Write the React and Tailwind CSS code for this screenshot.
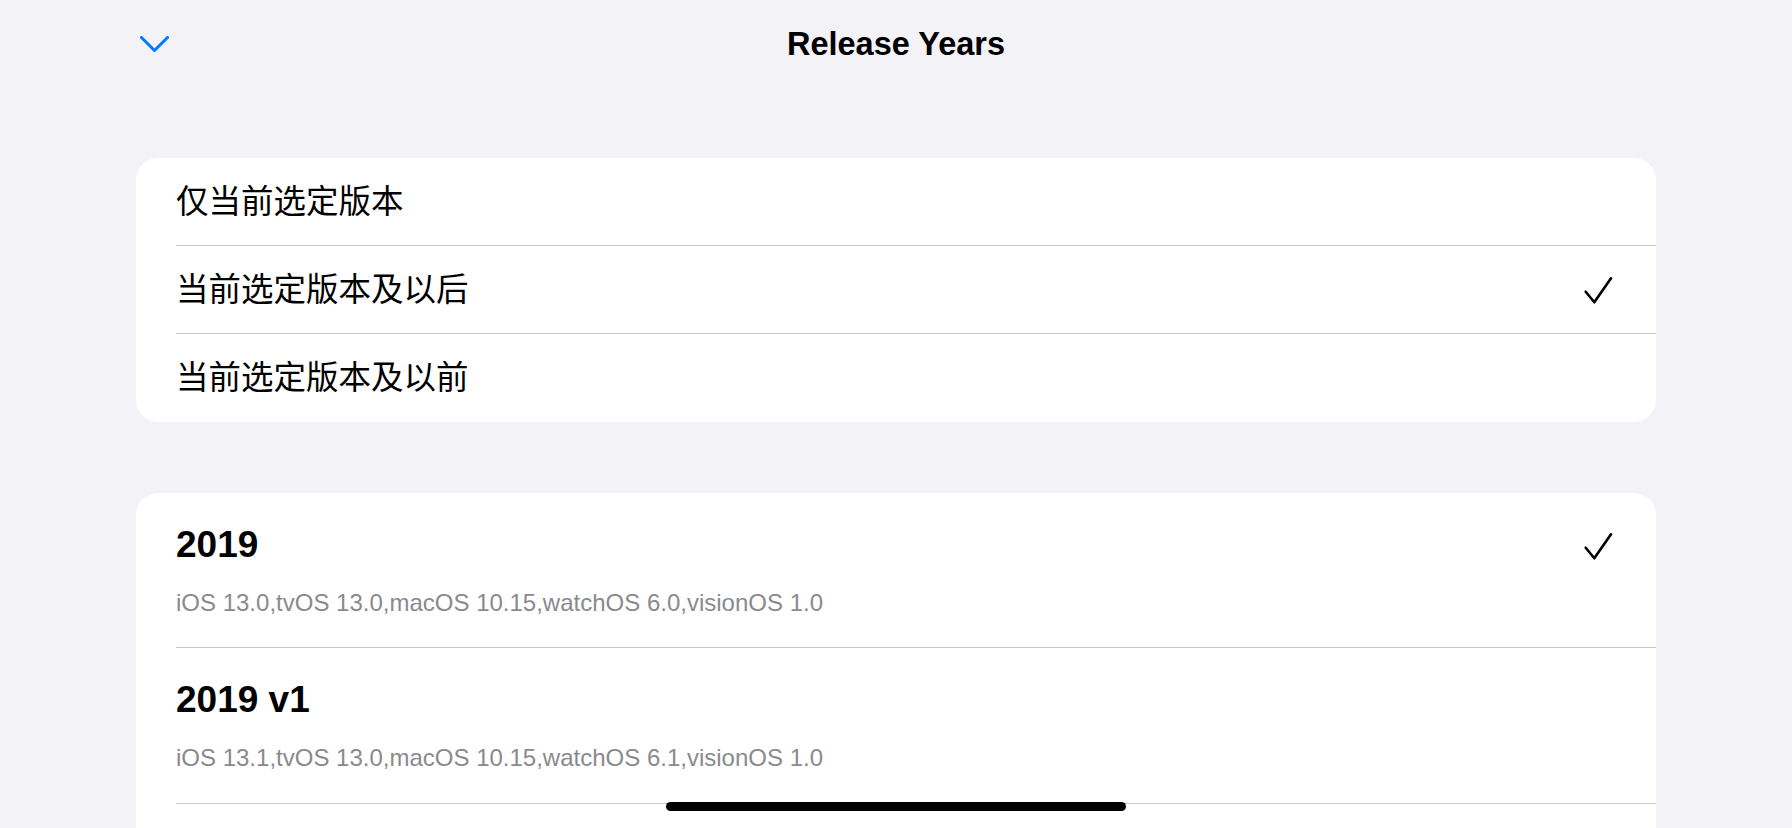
import React from "react";

const Check = ({ className = "" }) => (
  <svg
    viewBox="0 0 30 30"
    className={`h-[30px] w-[30px] shrink-0 ${className}`}
    fill="none"
    stroke="#000"
    strokeWidth="2.6"
    strokeLinecap="round"
    strokeLinejoin="round"
  >
    <path d="M2.7 16.7 L11.3 27.3 L28 3.3" />
  </svg>
);

const scopeOptions = [
  { label: "仅当前选定版本", checked: false },
  { label: "当前选定版本及以后", checked: true },
  { label: "当前选定版本及以前", checked: false },
];

const releases = [
  {
    name: "2019",
    platforms: "iOS 13.0,tvOS 13.0,macOS 10.15,watchOS 6.0,visionOS 1.0",
    checked: true,
  },
  {
    name: "2019 v1",
    platforms: "iOS 13.1,tvOS 13.0,macOS 10.15,watchOS 6.1,visionOS 1.0",
    checked: false,
  },
];

export default function App() {
  return (
    <div className="relative h-[828px] w-full overflow-hidden bg-[#f2f2f7] font-['Liberation_Sans','Noto_Sans_CJK_SC',sans-serif] text-black">
      {/* Navigation bar */}
      <div className="grid grid-cols-[1fr_auto_1fr] pt-[24px]">
        <div className="pl-[140px]">
          <svg
            viewBox="0 0 29 16"
            className="mt-[12px] h-[16px] w-[29px]"
            fill="none"
            stroke="#007aff"
            strokeWidth="3"
            strokeLinecap="round"
            strokeLinejoin="round"
          >
            <path d="M1.5 1.5 L14.5 14.5 L27.5 1.5" />
          </svg>
        </div>
        <h1 className="text-[32.5px] font-bold leading-[40px]">Release Years</h1>
        <div />
      </div>

      {/* Scope options */}
      <div className="mx-[136px] mt-[94px] overflow-hidden rounded-[22px] bg-white">
        {scopeOptions.map((opt, i) => (
          <div key={opt.label} className="pl-10">
            <div
              className={`flex h-[88px] items-center justify-between pr-[43px] ${
                i < scopeOptions.length - 1 ? "border-b border-[#c6c6c8]" : ""
              }`}
            >
              <span className="text-[32.5px] leading-[40px]">{opt.label}</span>
              {opt.checked && <Check />}
            </div>
          </div>
        ))}
      </div>

      {/* Release list */}
      <div className="mx-[136px] mt-[71px] overflow-hidden rounded-t-[22px] bg-white">
        {releases.map((r, i) => (
          <div key={r.name} className="pl-10">
            <div
              className={`flex items-start justify-between border-b border-[#c6c6c8] pr-[43px] pt-8 ${
                i === 0 ? "pb-[30px]" : "pb-[31px]"
              }`}
            >
              <div className="flex flex-col">
                <span className="text-[37px] font-bold leading-[40px]">
                  {r.name}
                </span>
                <span className="mt-6 text-[24px] leading-[28px] text-[#8a8a8e]">
                  {r.platforms}
                </span>
              </div>
              {r.checked && <Check className="mt-[6px]" />}
            </div>
          </div>
        ))}
        <div className="h-[60px]" />
      </div>

      {/* Home indicator */}
      <div className="absolute bottom-[17px] left-1/2 h-[9px] w-[460px] -translate-x-1/2 rounded-full bg-black" />
    </div>
  );
}
